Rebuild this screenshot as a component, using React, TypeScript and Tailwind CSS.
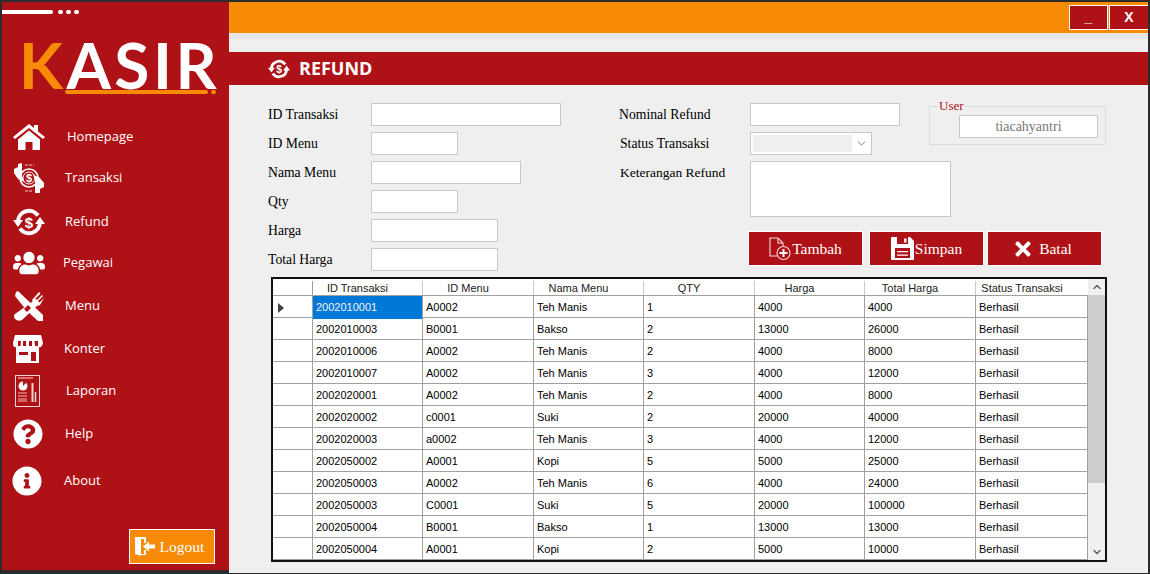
import React from "react";
import { FaQuestionCircle, FaInfoCircle, FaUsers, FaTimes } from "react-icons/fa";
import { ChevronDown, ChevronUp } from "lucide-react";

function HomeIcon() {
  return (
    <svg viewBox="0 0 32 26" className="w-[32px] h-[26px]" fill="white">
      <path d="M0 13 L16 0 L21 4 V1 H25 V7.500 L32 13 L30 15 L16 4 L2 15Z" />
      <path d="M5 15.500 L16 6.500 L27 15.500 V26 H19.500 V18 H12.500 V26 H5Z" />
    </svg>
  );
}

function TransaksiIcon() {
  return (
    <svg viewBox="0 0 32 32" className="w-[32px] h-[32px]" fill="white">
      <path d="M1 7 L5 5 L5 2 L9 1 V14 L11 20 L5 17 L1 11Z" />
      <path d="M31 25 L27 27 V31 H22 V18 L20 13 L26 15 L31 21Z" />
      <circle cx="16" cy="16" r="9" fill="none" stroke="white" strokeWidth="1.600" />
      <circle cx="16" cy="16" r="6" fill="none" stroke="white" strokeWidth="1" />
      <text x="16" y="20" textAnchor="middle" fontSize="11" fontWeight="700" fontFamily="Liberation Sans, sans-serif">$</text>
      <path d="M12 3 H21 M12 29 H20" stroke="white" strokeWidth="0.800" strokeDasharray="3 1" />
    </svg>
  );
}

function RefundIcon({ small }: { small?: boolean }) {
  return (
    <svg viewBox="0 0 32 28" className={small ? "w-[22px] h-[20px]" : "w-[32px] h-[28px]"} fill="none">
      <path d="M5 14 A11 11 0 0 1 25 7.500" stroke="white" strokeWidth="4" />
      <path d="M27 14 A11 11 0 0 1 7 20.500" stroke="white" strokeWidth="4" />
      <path d="M0 12 L10 12 L5 19Z M32 16 L22 16 L27 9Z" fill="white" />
      <text x="16" y="20" textAnchor="middle" fontSize="15" fontWeight="700" fill="white" fontFamily="Liberation Sans, sans-serif">$</text>
    </svg>
  );
}

function MenuIcon() {
  return (
    <svg viewBox="0 0 31 31" className="w-[31px] h-[31px]" fill="white">
      <path d="M3 1 L5 0 L30 24 V30 H25 L14 20 L2 5Z" />
      <path d="M23 8 L27 12 L9 29 Q5 31 2 28 Q0 25 2 23Z" />
      <path d="M19 9 L26 1 L27.500 2.500 L22 8 L23.500 9.500 L29 4 L30 5 L24.500 10.500 L26 12 L31 7 L27 14 Q24 16 21 13Z" />
      <path d="M11 18 L15 14 L18 17 L14 21Z" fill="#ae1116" />
    </svg>
  );
}

function KonterIcon() {
  return (
    <svg viewBox="0 0 30 28" className="w-[30px] h-[28px]" fill="white">
      <path d="M2 0 H28 L30 8 Q29 13 26 12 L26 28 H3 V12 Q0 13 0 8Z" />
      <path d="M5 6 H8 L7.500 11 H5Z M10 6 H13 V11 H10Z M16 6 H19 V11 H16Z M21.500 6 H25 V11 H22Z" fill="#ae1116" />
      <path d="M6 17 H15 V20 H6Z M18 17 H23 V26 H18Z" fill="#ae1116" />
    </svg>
  );
}

function LaporanIcon() {
  return (
    <svg viewBox="0 0 25 32" className="w-[25px] h-[32px] ml-[2px]" fill="none">
      <rect x="0.500" y="0.500" width="24" height="31" stroke="#f4d5d5" />
      <path d="M3 3 H18" stroke="#f0b8b8" strokeWidth="1.200" />
      <circle cx="8" cy="11" r="4.500" fill="white" />
      <path d="M8 11 L8 5 L12 7Z" fill="#ae1116" />
      <path d="M3 18 H12 M3 21 H12 M3 24 H12 M3 26 H12" stroke="#f0b8b8" strokeWidth="1" />
      <path d="M17.500 8 V27" stroke="#f4d5d5" strokeWidth="2" />
      <path d="M20.500 17 V27" stroke="#f4d5d5" strokeWidth="1.500" />
    </svg>
  );
}

function LogoutIcon() {
  return (
    <svg viewBox="0 0 21 21" className="w-[21px] h-[21px]" fill="white">
      <path d="M0 1 H11 V7 H9 V3 H6 V18 H9 V14 H11 V19 H6 V20 L0 18Z" />
      <path d="M8 10.500 L14 5.500 V8.500 H20 V12.500 H14 V15.500Z" />
    </svg>
  );
}

function TambahIcon() {
  return (
    <svg viewBox="0 0 22 24" className="w-[22px] h-[24px]" fill="none" stroke="#f6dada" strokeWidth="1.100">
      <path d="M8 19 H1 V1 H9 L14 6 V9 M9 1 V6 H14" />
      <circle cx="14.500" cy="16" r="6.500" />
      <path d="M14.500 12 V20 M10.500 16 H18.500" stroke="white" strokeWidth="2" />
    </svg>
  );
}

function SimpanIcon() {
  return (
    <svg viewBox="0 0 23 23" className="w-[23px] h-[23px]" fill="white">
      <path d="M1 0 H19 L23 4 V22 Q23 23 22 23 H1 Q0 23 0 22 V1 Q0 0 1 0Z" />
      <path d="M6 0 H17 V7 H6Z" fill="#ae1116" />
      <path d="M13 1.500 H15.500 V5.500 H13Z" />
      <path d="M4 11 H19 V21 H4Z" fill="#ae1116" />
      <path d="M6 14 H17 V15.200 H6Z M6 17.500 H17 V18.700 H6Z" />
    </svg>
  );
}

const navItems = [
  { label: "Homepage", icon: <HomeIcon />, gap: "ml-[5px]", next: "mb-[11px]" },
  { label: "Transaksi", icon: <TransaksiIcon />, gap: "ml-[3px]", next: "mb-[14px]" },
  { label: "Refund", icon: <RefundIcon />, gap: "ml-[3px]", next: "mb-[11px]" },
  { label: "Pegawai", icon: <FaUsers size={32} color="white" />, gap: "ml-[1px]", next: "mb-[13px]" },
  { label: "Menu", icon: <MenuIcon />, gap: "ml-[3px]", next: "mb-[13px]" },
  { label: "Konter", icon: <KonterIcon />, gap: "ml-[2px]", next: "mb-[12px]" },
  { label: "Laporan", icon: <LaporanIcon />, gap: "ml-[4px]", next: "mb-[13px]" },
  { label: "Help", icon: <FaQuestionCircle size={30} color="white" />, gap: "ml-[3px]", next: "mb-[17px]" },
  { label: "About", icon: <FaInfoCircle size={30} color="white" className="ml-[-1px]" />, gap: "ml-[2px]", next: "" },
];

const columns = ["ID Transaksi", "ID Menu", "Nama Menu", "QTY", "Harga", "Total Harga", "Status Transaksi"];

const rows = [
  ["2002010001", "A0002", "Teh Manis", "1", "4000", "4000", "Berhasil"],
  ["2002010003", "B0001", "Bakso", "2", "13000", "26000", "Berhasil"],
  ["2002010006", "A0002", "Teh Manis", "2", "4000", "8000", "Berhasil"],
  ["2002010007", "A0002", "Teh Manis", "3", "4000", "12000", "Berhasil"],
  ["2002020001", "A0002", "Teh Manis", "2", "4000", "8000", "Berhasil"],
  ["2002020002", "c0001", "Suki", "2", "20000", "40000", "Berhasil"],
  ["2002020003", "a0002", "Teh Manis", "3", "4000", "12000", "Berhasil"],
  ["2002050002", "A0001", "Kopi", "5", "5000", "25000", "Berhasil"],
  ["2002050003", "A0002", "Teh Manis", "6", "4000", "24000", "Berhasil"],
  ["2002050003", "C0001", "Suki", "5", "20000", "100000", "Berhasil"],
  ["2002050004", "B0001", "Bakso", "1", "13000", "13000", "Berhasil"],
  ["2002050004", "A0001", "Kopi", "2", "5000", "10000", "Berhasil"],
];

const gridCols = "grid grid-cols-[40px_110px_111px_110px_111px_110px_111px_112px]";

function Field({ label, width }: { label: string; width: string }) {
  return (
    <div className="flex items-center h-[23px]">
      <span className="w-[103px] shrink-0 text-[13.7px] leading-none text-black">{label}</span>
      <input className={`${width} h-[23px] bg-white border border-[#c8c8c8]`} />
    </div>
  );
}

function ActionButton({ icon, label, extra }: { icon: React.ReactNode; label: string; extra?: string }) {
  return (
    <button className={`w-[115px] h-[35px] bg-[#ae1116] border border-white flex items-center justify-center gap-[1px] text-white text-[15.5px] ${extra ?? ""}`}>
      {icon}
      <span>{label}</span>
    </button>
  );
}

export default function App() {
  return (
    <div className="w-[1150px] h-[574px] bg-[#2b2b2b] pt-[2px] px-[2px] pb-[1px] flex overflow-hidden font-['Liberation_Serif',serif]">
      <aside className="w-[227px] h-[568px] bg-[#ae1116] flex flex-col shrink-0">
        <div className="flex items-center gap-[3px] mt-[7px] h-[5px]">
          <div className="w-[51px] h-[4px] bg-white rounded-r-full" />
          <div className="w-[5px] h-[4px] bg-white rounded-full ml-[2px]" />
          <div className="w-[5px] h-[4px] bg-white rounded-full" />
          <div className="w-[5px] h-[4px] bg-white rounded-full" />
        </div>
        <div className="mt-[24px] ml-[17px] w-[208px] font-['Lato',sans-serif] font-bold text-[64px] leading-[54px] h-[54px] tracking-[3.5px] whitespace-nowrap text-white">
          <span className="text-[#f78b08]">K</span>ASIR
        </div>
        <div className="ml-[63px] mt-[-3px] flex items-center gap-[3px] h-[5px]">
          <div className="w-[143px] h-[4px] rounded-full bg-[#f78b08]" />
          <div className="w-[5px] h-[4px] rounded-full bg-[#f78b08]" />
        </div>
        <nav className="mt-[28px] flex flex-col">
          {navItems.map((item) => (
            <div key={item.label} className={`flex items-center h-[30px] ${item.next}`}>
              <div className="w-[60px] pl-[11px] flex items-center shrink-0">{item.icon}</div>
              <span className={`${item.gap} font-['Open_Sans',sans-serif] text-[13px] text-white`}>{item.label}</span>
            </div>
          ))}
        </nav>
        <button className="mt-auto mb-[6px] mr-[14px] self-end w-[86px] h-[35px] bg-[#f78b08] border border-white flex items-center justify-center gap-[4px] pr-[5px] text-white text-[15.5px]">
          <LogoutIcon />
          <span>Logout</span>
        </button>
      </aside>

      <main className="flex-1 h-[571px] bg-[#efefef] flex flex-col">
        <header className="h-[31px] bg-[#f78b08] flex justify-end items-start pt-[3px] gap-[1px] shrink-0">
          <button className="w-[39px] h-[25px] bg-[#ae1116] border border-white text-white text-[14px] font-bold font-['Liberation_Sans',sans-serif]">_</button>
          <button className="w-[39px] h-[25px] bg-[#ae1116] border border-white border-r-0 text-white text-[14px] font-bold font-['Liberation_Sans',sans-serif]">X</button>
        </header>
        <div className="h-[6px] bg-[#e6e6e6] shrink-0" />
        <div className="mt-[13px] h-[33px] bg-[#ae1116] flex items-center pl-[39px] gap-[9px] shrink-0">
          <RefundIcon small />
          <span className="font-['Open_Sans',sans-serif] font-bold text-[18px] text-white">REFUND</span>
        </div>

        <div className="flex pt-[18px] pl-[39px]">
          <div className="w-[351px] flex flex-col gap-[6px]">
            <Field label="ID Transaksi" width="w-[190px]" />
            <Field label="ID Menu" width="w-[87px]" />
            <Field label="Nama Menu" width="w-[150px]" />
            <Field label="Qty" width="w-[87px]" />
            <Field label="Harga" width="w-[127px]" />
            <Field label="Total Harga" width="w-[127px]" />
          </div>
          <div className="flex flex-col">
            <div className="flex">
              <div className="w-[310px] flex flex-col gap-[6px]">
                <div className="flex items-center h-[23px]">
                  <span className="w-[131px] shrink-0 text-[13.7px] leading-none text-black">Nominal Refund</span>
                  <input className="w-[150px] h-[23px] bg-white border border-[#c8c8c8]" />
                </div>
                <div className="flex items-center h-[23px]">
                  <span className="w-[131px] shrink-0 pl-[1px] text-[13.7px] leading-none text-black">Status Transaksi</span>
                  <div className="w-[122px] h-[23px] bg-white border border-[#c8c8c8] flex items-center pl-[2px]">
                    <div className="w-[99px] h-[17px] bg-[#efefef]" />
                    <ChevronDown size={13} color="#a8a8a8" className="ml-[3px]" />
                  </div>
                </div>
                <div className="flex items-start">
                  <span className="w-[131px] shrink-0 pl-[1px] text-[13.5px] leading-[23px] text-black">Keterangan Refund</span>
                  <textarea className="w-[201px] h-[56px] shrink-0 bg-white border border-[#c8c8c8] resize-none" />
                </div>
              </div>
              <fieldset className="w-[177px] h-[46px] mt-[-4px] border border-[#dcdcdc]">
                <legend className="ml-[8px] px-[1px] text-[13px] leading-[14px] text-[#ae1116]">User</legend>
                <div className="mt-[2px] ml-[29px] w-[139px] h-[23px] bg-white border border-[#c8c8c8] flex items-center justify-center text-[14px] text-[#777777]">tiacahyantri</div>
              </fieldset>
            </div>
            <div className="flex ml-[129px] mt-[14px]">
              <ActionButton icon={<TambahIcon />} label="Tambah" />
              <div className="ml-[6px]">
                <ActionButton icon={<SimpanIcon />} label="Simpan" />
              </div>
              <div className="ml-[3px]">
                <ActionButton icon={<FaTimes size={22} color="white" className="mr-[4px]" />} label="Batal" extra="pr-[5px]" />
              </div>
            </div>
          </div>
        </div>

        <div className="mt-[6px] ml-[42px] w-[836px] h-[285px] border-2 border-[#111] bg-white flex font-['Liberation_Sans',sans-serif] text-[11px] text-black overflow-hidden">
          <div className="w-[815px] shrink-0">
            <div className={`${gridCols} h-[17px] border-b border-[#a0a0a0]`}>
              <div className="self-end h-[14px] border-r border-[#a0a0a0]" />
              {columns.map((col) => (
                <div key={col} className="self-end h-[14px] leading-[14px] text-center pr-[20px] border-r border-[#c8c8c8] last:border-r-0 text-[#222]">{col}</div>
              ))}
            </div>
            {rows.map((row, index) => (
              <div key={index} className={`${gridCols} h-[22px] border-b border-[#a0a0a0]`}>
                <div className="border-r border-[#a0a0a0] flex items-center pl-[5px]">
                  {index === 0 && <div className="w-0 h-0 border-y-[5px] border-y-transparent border-l-[6px] border-l-[#404040]" />}
                </div>
                {row.map((cell, cellIndex) => (
                  <div
                    key={cellIndex}
                    className={`border-r border-[#a0a0a0] pl-[3px] leading-[23px] ${index === 0 && cellIndex === 0 ? "bg-[#0078d7] text-[#f2f2f2]" : ""}`}
                  >
                    {cell}
                  </div>
                ))}
              </div>
            ))}
          </div>
          <div className="w-[17px] bg-[#f0f0f0] flex flex-col items-center">
            <div className="h-[16px] flex items-center justify-center"><ChevronUp size={12} strokeWidth={3} color="#606060" /></div>
            <div className="w-full h-[188px] bg-[#cdcdcd]" />
            <div className="mt-auto h-[17px] flex items-center justify-center"><ChevronDown size={12} strokeWidth={3} color="#606060" /></div>
          </div>
        </div>
      </main>
    </div>
  );
}
